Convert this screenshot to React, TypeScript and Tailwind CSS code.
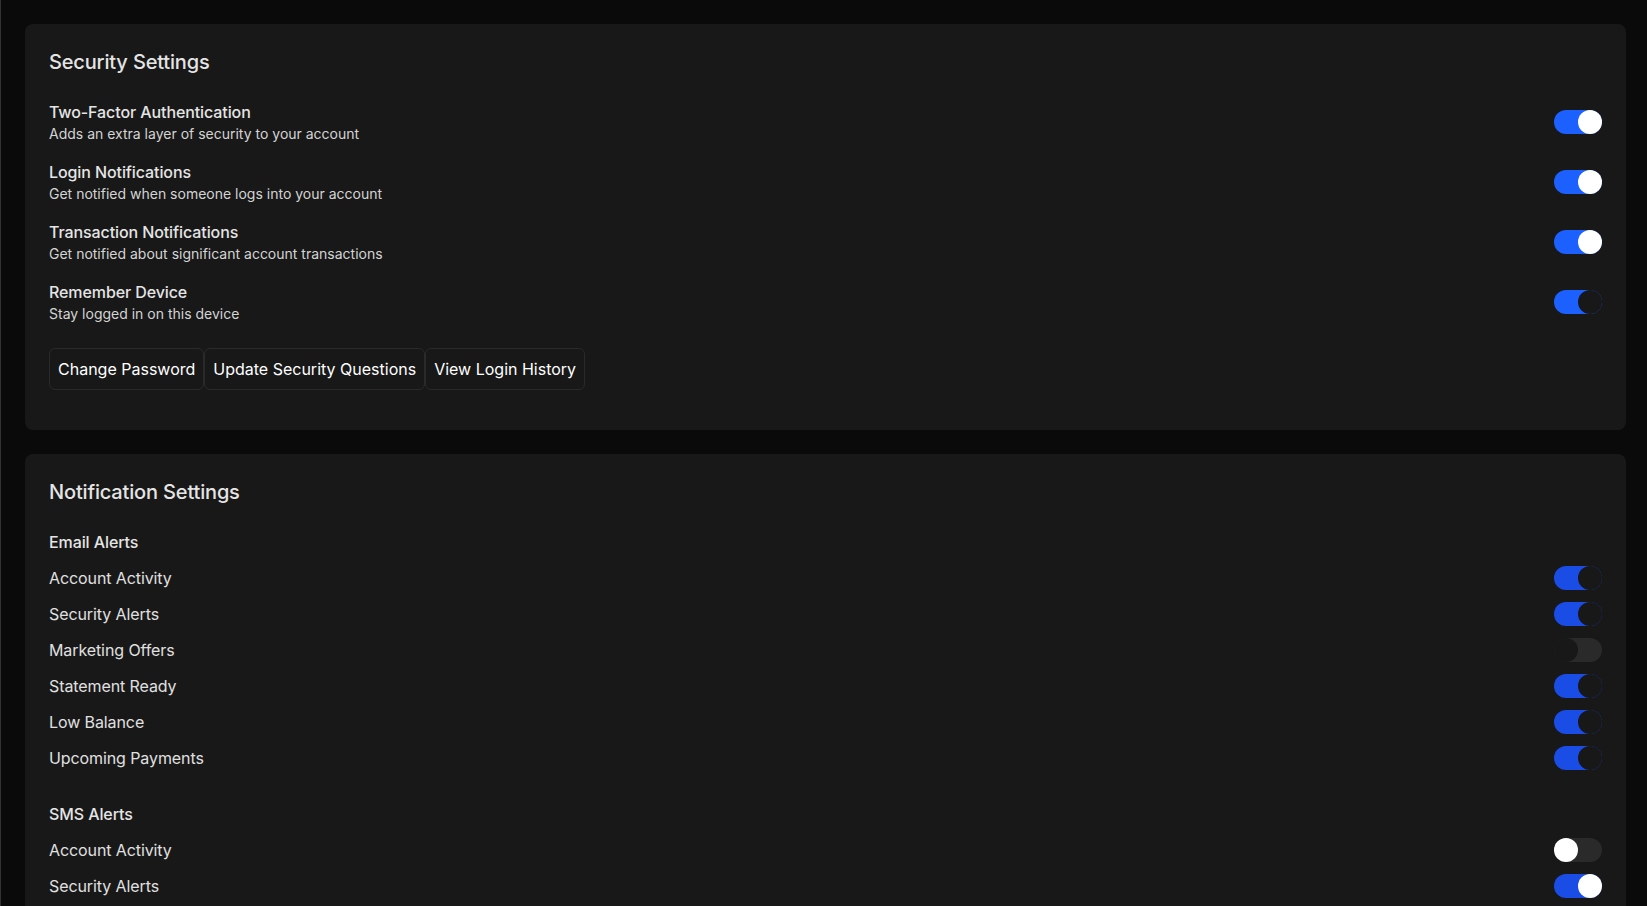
import React from "react";

type Knob = "white" | "dark";

function Toggle({ on, knob, tone = "bright" }: { on: boolean; knob: Knob; tone?: "bright" | "deep" }) {
  const track = on ? (tone === "bright" ? "bg-[#1c60ff]" : "bg-[#1a4de6]") : "bg-[#2a2a2a]";
  const knobCls = knob === "white" ? "bg-white" : "bg-[#181818]";
  return (
    <div className={`flex h-6 w-12 shrink-0 rounded-full ${track} ${on ? "justify-end" : "justify-start"}`}>
      <div className={`h-6 w-6 rounded-full ${knobCls}`} />
    </div>
  );
}

const security = [
  { title: "Two-Factor Authentication", desc: "Adds an extra layer of security to your account", knob: "white" as Knob },
  { title: "Login Notifications", desc: "Get notified when someone logs into your account", knob: "white" as Knob },
  { title: "Transaction Notifications", desc: "Get notified about significant account transactions", knob: "white" as Knob },
  { title: "Remember Device", desc: "Stay logged in on this device", knob: "dark" as Knob },
];

const emailAlerts = [
  { label: "Account Activity", on: true, knob: "dark" as Knob },
  { label: "Security Alerts", on: true, knob: "dark" as Knob },
  { label: "Marketing Offers", on: false, knob: "dark" as Knob },
  { label: "Statement Ready", on: true, knob: "dark" as Knob },
  { label: "Low Balance", on: true, knob: "dark" as Knob },
  { label: "Upcoming Payments", on: true, knob: "dark" as Knob },
];

const smsAlerts = [
  { label: "Account Activity", on: false, knob: "white" as Knob },
  { label: "Security Alerts", on: true, knob: "white" as Knob },
  { label: "Low Balance", on: true, knob: "white" as Knob },
  { label: "Upcoming Payments", on: false, knob: "white" as Knob },
];

function AlertGroup({ heading, items }: { heading: string; items: { label: string; on: boolean; knob: Knob }[] }) {
  return (
    <div className="space-y-3">
      <h3 className="text-base font-medium leading-6 tracking-[-0.006em] text-[#e5e5e5]">{heading}</h3>
      {items.map((it) => (
        <div key={it.label} className="flex items-center justify-between">
          <span className="text-base leading-6 tracking-[-0.006em] text-[#e0e0e0]">{it.label}</span>
          <Toggle on={it.on} knob={it.knob} tone="deep" />
        </div>
      ))}
    </div>
  );
}

export default function App() {
  return (
    <div
      className="min-h-screen border-l border-[#333333] bg-[#0a0a0a] pb-6 pl-6 pr-[21px] pt-6"
      style={{ fontFamily: "Inter, 'Liberation Sans', sans-serif" }}
    >
      <div className="space-y-6">
        <section className="rounded-lg bg-[#181818] px-6 pb-10 pt-6">
          <div className="space-y-6">
            <h2 className="text-xl font-medium leading-7 tracking-[-0.008em] text-[#e5e5e5]">Security Settings</h2>
            <div className="space-y-4">
              {security.map((s) => (
                <div key={s.title} className="flex items-center justify-between">
                  <div>
                    <p className="text-base font-medium leading-6 tracking-[-0.006em] text-[#e5e5e5]">{s.title}</p>
                    <p className="text-sm leading-5 text-[#d4d4d4]">{s.desc}</p>
                  </div>
                  <Toggle on knob={s.knob} />
                </div>
              ))}
            </div>
            <div className="flex">
              {["Change Password", "Update Security Questions", "View Login History"].map((b) => (
                <button
                  key={b}
                  className="rounded-md border border-[#2a2a2a] bg-[#181818] px-2 py-2 text-base leading-6 text-white"
                >
                  {b}
                </button>
              ))}
            </div>
          </div>
        </section>

        <section className="rounded-lg bg-[#181818] px-6 pb-10 pt-6">
          <div className="space-y-6">
            <h2 className="text-xl font-medium leading-7 tracking-[-0.008em] text-[#e5e5e5]">Notification Settings</h2>
            <div className="space-y-8">
              <AlertGroup heading="Email Alerts" items={emailAlerts} />
              <AlertGroup heading="SMS Alerts" items={smsAlerts} />
            </div>
          </div>
        </section>
      </div>
    </div>
  );
}
